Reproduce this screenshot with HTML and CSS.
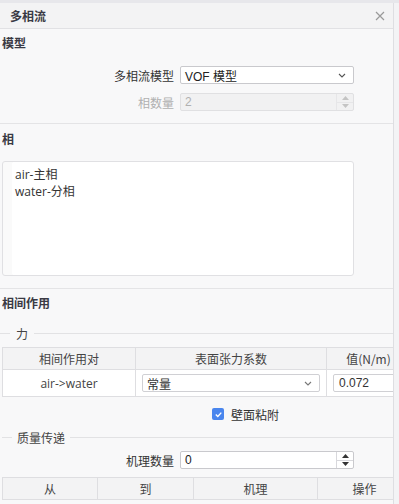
FILE: index.html
```html
<!DOCTYPE html>
<html lang="zh">
<head>
<meta charset="utf-8">
<link rel="stylesheet" href="styles.css">
</head>
<body>
<div class="frame">
  <div class="panel">
    <div class="header">
      <span class="title">多相流</span>
      <svg class="close" width="10" height="10" viewBox="0 0 10 10"><path d="M1 1 L9 9 M9 1 L1 9" stroke="#9a9a9a" stroke-width="1.2" fill="none"/></svg>
    </div>
    <div class="body">
      <div class="section">
        <div class="sec-title">模型</div>
        <div class="form-row first">
          <label class="lbl">多相流模型</label>
          <div class="select">
            <span class="val">VOF 模型</span>
            <svg class="chev" width="8" height="5" viewBox="0 0 8 5"><path d="M1 1 L4 4 L7 1" stroke="#555" stroke-width="1.1" fill="none"/></svg>
          </div>
        </div>
        <div class="form-row">
          <label class="lbl disabled">相数量</label>
          <div class="spin disabled">
            <span class="val">2</span>
            <div class="spin-btns">
              <span class="sb"><svg width="7" height="4" viewBox="0 0 7 4"><path d="M0 4 L3.5 0 L7 4Z" fill="#c4c4c4"/></svg></span>
              <span class="sb"><svg width="7" height="4" viewBox="0 0 7 4"><path d="M0 0 L3.5 4 L7 0Z" fill="#c4c4c4"/></svg></span>
            </div>
          </div>
        </div>
      </div>
      <div class="section">
        <div class="sec-title">相</div>
        <div class="listbox">
          <div class="item">air-主相</div>
          <div class="item">water-分相</div>
        </div>
      </div>
      <div class="section last">
        <div class="sec-title">相间作用</div>
        <div class="legend legend-force"><span>力</span></div>
        <table class="grid t1">
          <colgroup><col class="c1"><col class="c2"><col class="c3"></colgroup>
          <thead><tr><th>相间作用对</th><th>表面张力系数</th><th>值(N/m)</th></tr></thead>
          <tbody><tr>
            <td class="pair">air-&gt;water</td>
            <td><div class="select small"><span class="val">常量</span><svg class="chev" width="8" height="5" viewBox="0 0 8 5"><path d="M1 1 L4 4 L7 1" stroke="#777" stroke-width="1.1" fill="none"/></svg></div></td>
            <td><div class="input small"><span class="val">0.072</span></div></td>
          </tr></tbody>
        </table>
        <div class="check-row">
          <span class="checkbox"><svg width="9" height="9" viewBox="0 0 9 9"><path d="M1.8 4.6 L3.8 6.5 L7.3 2.6" stroke="#fff" stroke-width="1.4" fill="none"/></svg></span>
          <span class="check-label">壁面粘附</span>
        </div>
        <div class="legend legend-mass"><span>质量传递</span></div>
        <div class="form-row mech">
          <label class="lbl">机理数量</label>
          <div class="spin">
            <span class="val">0</span>
            <div class="spin-btns">
              <span class="sb"><svg width="7" height="4" viewBox="0 0 7 4"><path d="M0 4 L3.5 0 L7 4Z" fill="#333"/></svg></span>
              <span class="sb"><svg width="7" height="4" viewBox="0 0 7 4"><path d="M0 0 L3.5 4 L7 0Z" fill="#333"/></svg></span>
            </div>
          </div>
        </div>
        <table class="grid t2">
          <colgroup><col class="d1"><col class="d2"><col class="d3"><col class="d4"></colgroup>
          <thead><tr><th>从</th><th>到</th><th>机理</th><th>操作</th></tr></thead>
        </table>
      </div>
    </div>
  </div>
  <div class="gutter"></div>
</div>
</body>
</html>
```
FILE: styles.css
```css
* { box-sizing: border-box; }
html, body { margin: 0; padding: 0; }
body {
  width: 399px;
  height: 504px;
  overflow: hidden;
  background: #e7e7eb;
  font-family: "Noto Sans", "Noto Sans CJK SC", sans-serif;
  font-size: 12px;
  color: #333;
}
.frame {
  display: flex;
  margin-top: 3px;
  height: 501px;
}
.panel {
  width: 394px;
  background: #f8f8f9;
  border-right: 1px solid #dedee2;
  overflow: hidden;
  flex: none;
}
.gutter {
  flex: 1;
  background: #f3f3f5;
}
.header {
  height: 26px;
  background: #f3f3f4;
  border-bottom: 1px solid #e1e1e4;
  display: flex;
  align-items: center;
  justify-content: space-between;
  padding: 0 8px 0 10px;
}
.title {
  font-family: "Noto Sans CJK SC", sans-serif;
  font-weight: bold;
  font-size: 12px;
  color: #3a3a44;
}
.section {
  border-bottom: 1px solid #e4e4e6;
  padding: 0 0 0 2px;
}
.section.last { border-bottom: none; }
.sec-title {
  font-family: "Noto Sans CJK SC", sans-serif;
  font-weight: bold;
  font-size: 12px;
  color: #3a3a44;
  height: 18px;
  line-height: 18px;
  margin-top: 6px;
}
.section:first-child .sec-title { margin-top: 5px; }
.section.last .sec-title { margin-top: 5px; }
.form-row {
  display: flex;
  align-items: center;
  height: 18px;
  margin-bottom: 9px;
}
.form-row.first { margin-top: 14px; }
.section:first-child .form-row:last-child { margin-bottom: 12px; }
.lbl {
  width: 178px;
  padding-right: 6px;
  text-align: right;
  font-family: "Noto Sans CJK SC", sans-serif;
  font-size: 12px;
  color: #333;
}
.lbl.disabled { color: #b0b0b0; }
.select, .spin, .input {
  width: 174px;
  height: 18px;
  background: #fff;
  border: 1px solid #c9c9cd;
  border-radius: 2px;
  display: flex;
  align-items: center;
  font-family: "Liberation Sans", "Noto Sans CJK SC", sans-serif;
  font-size: 12px;
  color: #222;
}
.select .val, .spin .val, .input .val {
  flex: 1;
  padding-left: 4px;
}
.select .chev { margin-right: 7px; }
.spin.disabled {
  background: #f1f1f2;
  border-color: #e0e0e2;
  color: #b0b0b0;
}
.spin-btns {
  width: 17px;
  height: 100%;
  display: flex;
  flex-direction: column;
  border-left: 1px solid #d8d8dc;
}
.spin.disabled .spin-btns { border-left-color: #e6e6e8; }
.sb {
  flex: 1;
  display: flex;
  align-items: center;
  justify-content: center;
}
.sb + .sb { border-top: 1px solid #d8d8dc; }
.spin.disabled .sb + .sb { border-top-color: #e6e6e8; }
.listbox {
  width: 352px;
  height: 115px;
  margin-top: 13px;
  margin-bottom: 12px;
  background: #fff;
  border: 1px solid #e0e0e3;
  border-radius: 3px;
  padding: 4px 0 0 12px;
  box-shadow: inset 9px 0 0 #fafafa;
}
.item {
  font-family: "Open Sans", "Noto Sans CJK SC", sans-serif;
  font-size: 12px;
  line-height: 17px;
  color: #333;
}
.legend {
  display: flex;
  align-items: center;
  gap: 6px;
  height: 16px;
  font-family: "Noto Sans CJK SC", sans-serif;
  font-size: 12px;
  color: #444;
}
.legend::before {
  content: "";
  width: 10px;
  border-top: 1px solid #e2e2e4;
}
.legend::after {
  content: "";
  flex: 1;
  border-top: 1px solid #e2e2e4;
}
.legend-force { margin-left: -2px; margin-top: 13px; margin-bottom: 6px; }
.legend-mass { gap: 5px; margin-top: 5px; margin-bottom: 6px; }
.grid {
  border-collapse: collapse;
  table-layout: fixed;
  background: #fff;
}
.t1 { width: 408px; }
.t2 { width: 409px; margin-top: 8px; }
.c1 { width: 133px; }
.c2 { width: 191px; }
.c3 { width: 84px; }
.d1 { width: 95px; }
.d2 { width: 96px; }
.d3 { width: 124px; }
.d4 { width: 94px; }
.grid th {
  background: #f3f3f4;
  border: 1px solid #dedee1;
  height: 22px;
  font-weight: normal;
  font-family: "Noto Sans CJK SC", sans-serif;
  font-size: 12px;
  color: #444;
  padding: 0;
}
.grid td {
  border: 1px solid #dedee1;
  height: 27px;
  padding: 0;
}
.grid td.pair {
  text-align: center;
  font-family: "Open Sans", sans-serif;
  font-size: 12px;
  color: #444;
}
.select.small {
  width: 178px;
  height: 18px;
  margin-left: 6px;
  border-color: #d0d0d4;
}
.select.small .val { font-family: "Noto Sans CJK SC", sans-serif; color: #333; }
.input.small {
  width: 100px;
  height: 18px;
  margin-left: 6px;
  border-color: #d0d0d4;
}
.input.small .val { padding-left: 5px; color: #333; }
.check-row {
  display: flex;
  align-items: center;
  height: 20px;
  margin-top: 7px;
  padding-left: 210px;
  gap: 7px;
}
.checkbox {
  width: 12px;
  height: 12px;
  border-radius: 2px;
  background: #4a86ee;
  display: flex;
  align-items: center;
  justify-content: center;
}
.check-label {
  font-family: "Noto Sans CJK SC", sans-serif;
  font-size: 12px;
  color: #333;
}
.form-row.mech { margin-bottom: 0; }
.mech .spin { color: #222; }
```
